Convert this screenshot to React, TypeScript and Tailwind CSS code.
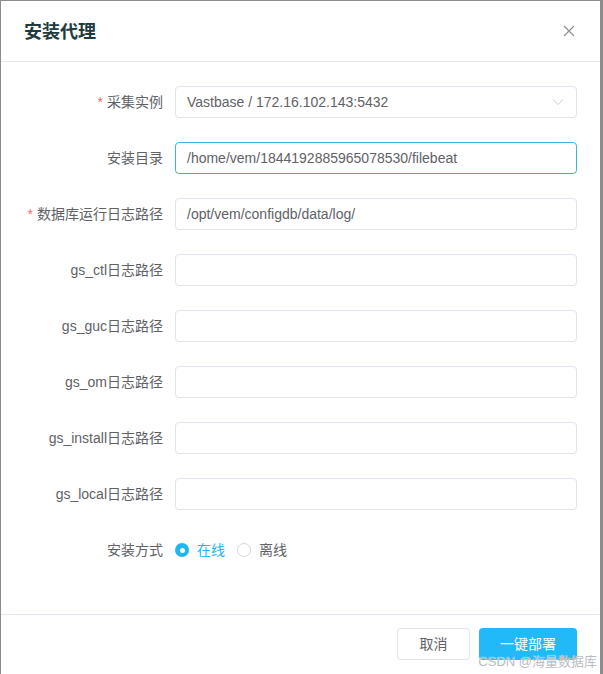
import React from 'react'

const font = { fontFamily: '"Liberation Sans", "Noto Sans CJK SC", sans-serif' }

const rows = [
    { label: '采集实例', required: true, value: 'Vastbase / 172.16.102.143:5432', select: true },
    { label: '安装目录', value: '/home/vem/1844192885965078530/filebeat', focused: true },
    { label: '数据库运行日志路径', required: true, value: '/opt/vem/configdb/data/log/' },
    { label: 'gs_ctl日志路径', value: '' },
    { label: 'gs_guc日志路径', value: '' },
    { label: 'gs_om日志路径', value: '' },
    { label: 'gs_install日志路径', value: '' },
    { label: 'gs_local日志路径', value: '' },
]

export default function App() {
    return (
        <div style={font} className="relative w-[603px] h-[674px] bg-white border-l border-t border-r-[3px] border-[#8c8c8c] flex flex-col overflow-hidden">
            {/* header */}
            <div className="h-[61px] shrink-0 flex items-center justify-between pl-[23px] pr-[25px] border-b border-[#e4e7ed]">
                <h1 className="text-[18px] font-bold text-[#213a3d] pt-[2px]">安装代理</h1>
                <svg width="12" height="12" viewBox="0 0 12 12" className="-mt-[1px]">
                    <path d="M1 1L11 11M11 1L1 11" stroke="#8d9096" strokeWidth="1.2" />
                </svg>
            </div>

            {/* body */}
            <div className="flex-1 flex flex-col gap-[24px] pt-[24px]">
                {rows.map((r) => (
                    <div key={r.label} className="flex items-center h-[32px]">
                        <label className="w-[162px] text-right text-[14px] text-[#606266]">
                            {r.required && <span className="text-[#f56c6c] mr-[4px]">*</span>}
                            {r.label}
                        </label>
                        <div
                            className={
                                'ml-[12px] w-[402px] h-[32px] rounded-[4px] border flex items-center justify-between px-[11px] text-[14px] text-[#606266] ' +
                                (r.focused ? 'border-[#38b6d8]' : 'border-[#e1e4ea]')
                            }
                        >
                            <span>{r.value}</span>
                            {r.select && (
                                <svg width="12" height="8" viewBox="0 0 12 8" className="mr-[1px]">
                                    <path d="M1 1.5L6 6.5L11 1.5" fill="none" stroke="#c8ccd3" strokeWidth="1" />
                                </svg>
                            )}
                        </div>
                    </div>
                ))}

                <div className="flex items-center h-[32px]">
                    <label className="w-[162px] text-right text-[14px] text-[#606266]">安装方式</label>
                    <div className="ml-[12px] flex items-center text-[14px]">
                        <span className="w-[14px] h-[14px] rounded-full bg-[#1eb6f3] flex items-center justify-center">
                            <span className="w-[5px] h-[5px] rounded-full bg-white"></span>
                        </span>
                        <span className="ml-[8px] text-[#1eb6f3]">在线</span>
                        <span className="ml-[12px] w-[14px] h-[14px] rounded-full border border-[#d2d6dc] bg-white"></span>
                        <span className="ml-[8px] text-[#606266]">离线</span>
                    </div>
                </div>
            </div>

            {/* footer */}
            <div className="h-[60px] shrink-0 border-t border-[#e4e7ed] flex justify-end items-start pt-[13px] pr-[23px] gap-[9px]">
                <button className="w-[73px] h-[32px] rounded-[4px] border border-[#e1e4ea] bg-white text-[14px] text-[#606266]">取消</button>
                <button className="w-[98px] h-[32px] rounded-[4px] bg-[#21b9f7] text-[14px] text-white">一键部署</button>
            </div>

            <span className="absolute right-[3px] bottom-[3px] text-[13px] text-[#b8bcc2]" style={{ textShadow: '0 0 1px #ffffff' }}>
                CSDN @海量数据库
            </span>
        </div>
    )
}
